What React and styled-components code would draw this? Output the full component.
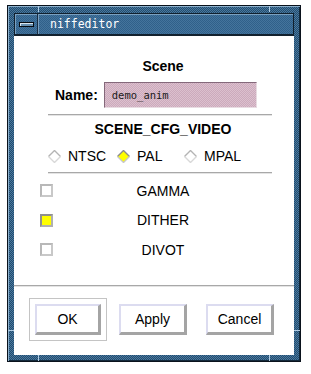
import React from 'react';
import styled, { createGlobalStyle } from 'styled-components';

const GlobalStyle = createGlobalStyle`
  html, body {
    margin: 0;
    padding: 0;
    background: #ffffff;
  }
  body {
    font-family: "Liberation Sans", Arial, sans-serif;
  }
`;

const dither = (a, b) =>
  `repeating-conic-gradient(${a} 0 25%, ${b} 0 50%) 0 0 / 2px 2px`;

const Page = styled.div`
  padding: 5px 0 0 7px;
`;

const WindowFrame = styled.div`
  position: relative;
  width: 294px;
  height: 357px;
  box-sizing: border-box;
  border: 1px solid #0a121c;
  background: ${dither('#244c6c', '#4878a0')};
  box-shadow: inset 1px 1px 0 #8cb0cc, inset -1px -1px 0 #142a3c;
  padding: 7px 6px 6px 6px;
  display: flex;
  flex-direction: column;
`;

const Notch = styled.span`
  position: absolute;
  background: #b0cce4;
  ${(p) => p.$style}
`;

const TitleBar = styled.div`
  height: 22px;
  display: flex;
  align-items: stretch;
  box-sizing: border-box;
  border: 1px solid #10202e;
  background: ${dither('#30608a', '#44749c')};
  box-shadow: inset 1px 1px 0 #7aa0c0;
`;

const MenuButton = styled.div`
  width: 22px;
  display: flex;
  align-items: center;
  justify-content: center;
  border-right: 1px solid #182e44;
  box-shadow: 1px 0 0 #7aa0c0;
`;

const MenuBar = styled.span`
  display: block;
  width: 13px;
  height: 3px;
  background: #6890b0;
  border: 1px solid #080c10;
  box-shadow: inset 1px 1px 0 #d8e6f0;
`;

const Title = styled.span`
  margin-left: 12px;
  align-self: center;
  font-family: "DejaVu Sans Mono", "Liberation Mono", monospace;
  font-size: 11.5px;
  color: #ffffff;
`;

const Client = styled.div`
  flex: 1;
  background: #ffffff;
  border-top: 1px solid #14222e;
  display: flex;
  flex-direction: column;
`;

const Form = styled.div`
  padding: 22px 0 0 34px;
  width: 224px;
`;

const Heading = styled.div`
  font-weight: bold;
  font-size: 14px;
  line-height: 16px;
  text-align: center;
  padding-left: 6px;
  color: #000;
  margin-top: ${(p) => p.$top || 0}px;
`;

const NameRow = styled.div`
  margin-top: 8px;
  padding-left: 7px;
  display: flex;
  align-items: center;
  gap: 6px;
`;

const Label = styled.span`
  font-weight: bold;
  font-size: 14px;
  color: #000;
`;

const Field = styled.div`
  width: 153px;
  height: 26px;
  box-sizing: border-box;
  background: ${dither('#ccaabc', '#dcc0ce')};
  border-top: 1px solid #84687a;
  border-left: 1px solid #84687a;
  border-right: 1px solid #e8dce2;
  border-bottom: 1px solid #e8dce2;
  display: flex;
  align-items: center;
  padding-left: 7px;
  font-family: "DejaVu Sans Mono", "Liberation Mono", monospace;
  font-size: 10.5px;
  color: #1a1a1a;
`;

const Rule = styled.div`
  height: 1px;
  background: #a8a8a8;
  border-bottom: 1px solid #e4e4e4;
  margin-top: ${(p) => p.$top || 0}px;
`;

const RadioRow = styled.div`
  margin-top: 11px;
  height: 16px;
  display: flex;
  align-items: center;
`;

const RadioItem = styled.div`
  width: ${(p) => p.$w}px;
  display: flex;
  align-items: center;
  gap: 7px;
  font-size: 14px;
  color: #000;
`;

const Diamond = ({ on }) => (
  <svg width="13" height="13" viewBox="0 0 13 13">
    <polygon
      points="6.5,0.5 12.5,6.5 6.5,12.5 0.5,6.5"
      fill={on ? '#ffff00' : '#ffffff'}
      stroke="none"
    />
    <polyline points="0.5,6.5 6.5,0.5 12.5,6.5" fill="none" stroke={on ? '#8c8c8c' : '#b4b4b4'} strokeWidth="1.4" />
    <polyline points="0.5,6.5 6.5,12.5 12.5,6.5" fill="none" stroke={on ? '#c8c8c8' : '#d8d8d8'} strokeWidth="1.4" />
  </svg>
);

const Toggles = styled.div`
  padding: 2px 21px 0 26px;
`;

const ToggleRow = styled.div`
  height: 29.5px;
  display: flex;
  align-items: center;
`;

const Box = styled.span`
  width: 13px;
  height: 13px;
  box-sizing: border-box;
  flex: none;
  background: ${(p) => (p.$on ? '#ffff00' : '#ffffff')};
  border: 2px solid ${(p) => (p.$on ? '#b0b0b0' : '#c8c8c8')};
  border-top-color: ${(p) => (p.$on ? '#909090' : '#b8b8b8')};
  border-left-color: ${(p) => (p.$on ? '#909090' : '#b8b8b8')};
`;

const ToggleLabel = styled.span`
  flex: 1;
  text-align: center;
  font-size: 14px;
  color: #000;
`;

const Spacer = styled.div`
  flex: 1;
`;

const ButtonBar = styled.div`
  height: 70px;
  border-top: 1px solid #a8a8a8;
  box-shadow: inset 0 1px 0 #e4e4e4;
  box-sizing: border-box;
  padding: 12px 0 0 15px;
  display: flex;
  gap: 6px;
`;

const ButtonWrap = styled.div`
  padding: 5px;
  border: 1px solid ${(p) => (p.$default ? '#c4c4c4' : 'transparent')};
  height: 43px;
  box-sizing: border-box;
  margin-right: ${(p) => p.$mr || 0}px;
`;

const Button = styled.button`
  width: ${(p) => p.$w}px;
  height: 31px;
  box-sizing: border-box;
  background: #ffffff;
  border-style: solid;
  border-width: 2px 3px 3px 2px;
  border-color: #dcdcf0 #a4a4a4 #a4a4a4 #dcdcf0;
  font-family: "Liberation Sans", Arial, sans-serif;
  font-size: 14px;
  color: #000;
  padding: 0;
  cursor: pointer;
`;

export default function App() {
  return (
    <>
      <GlobalStyle />
      <Page>
        <WindowFrame>
          <Notch $style="left: 30px; top: 0; width: 1px; height: 6px;" />
          <Notch $style="right: 30px; top: 0; width: 1px; height: 6px;" />
          <Notch $style="left: 30px; bottom: 0; width: 1px; height: 6px;" />
          <Notch $style="right: 30px; bottom: 0; width: 1px; height: 6px;" />
          <Notch $style="left: 0; bottom: 30px; width: 6px; height: 1px;" />
          <Notch $style="right: 0; bottom: 30px; width: 6px; height: 1px;" />
          <TitleBar>
            <MenuButton>
              <MenuBar />
            </MenuButton>
            <Title>niffeditor</Title>
          </TitleBar>
          <Client>
            <Form>
              <Heading>Scene</Heading>
              <NameRow>
                <Label>Name:</Label>
                <Field>demo_anim</Field>
              </NameRow>
              <Rule $top={6} />
              <Heading $top={5}>SCENE_CFG_VIDEO</Heading>
              <RadioRow>
                <RadioItem $w={69}>
                  <Diamond />
                  NTSC
                </RadioItem>
                <RadioItem $w={67}>
                  <Diamond on />
                  PAL
                </RadioItem>
                <RadioItem $w={70}>
                  <Diamond />
                  MPAL
                </RadioItem>
              </RadioRow>
              <Rule $top={8} />
            </Form>
            <Toggles>
              <ToggleRow>
                <Box />
                <ToggleLabel>GAMMA</ToggleLabel>
              </ToggleRow>
              <ToggleRow>
                <Box $on />
                <ToggleLabel>DITHER</ToggleLabel>
              </ToggleRow>
              <ToggleRow>
                <Box />
                <ToggleLabel>DIVOT</ToggleLabel>
              </ToggleRow>
            </Toggles>
            <Spacer />
            <ButtonBar>
              <ButtonWrap $default>
                <Button $w={66}>OK</Button>
              </ButtonWrap>
              <ButtonWrap $mr={1}>
                <Button $w={68}>Apply</Button>
              </ButtonWrap>
              <ButtonWrap>
                <Button $w={68}>Cancel</Button>
              </ButtonWrap>
            </ButtonBar>
          </Client>
        </WindowFrame>
      </Page>
    </>
  );
}
